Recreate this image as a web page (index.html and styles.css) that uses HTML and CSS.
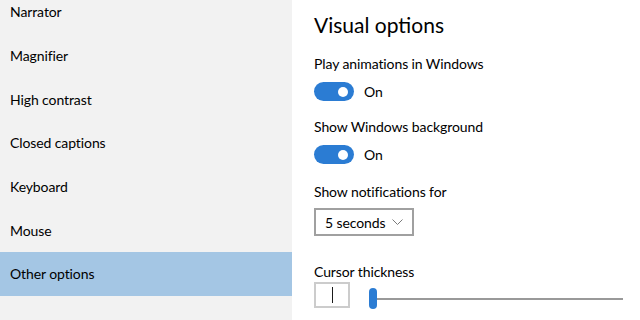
FILE: index.html
```html
<!DOCTYPE html>
<html lang="en">
<head>
    <meta charset="UTF-8">
    <title>Ease of Access - Other options</title>
    <link rel="stylesheet" href="styles.css">
</head>
<body>
    <!-- Left navigation -->
    <nav class="sidebar">
        <ul class="nav-list">
            <li class="nav-item">Narrator</li>
            <li class="nav-item">Magnifier</li>
            <li class="nav-item">High contrast</li>
            <li class="nav-item">Closed captions</li>
            <li class="nav-item">Keyboard</li>
            <li class="nav-item">Mouse</li>
            <li class="nav-item selected">Other options</li>
        </ul>
    </nav>

    <!-- Settings pane -->
    <main class="content">
        <h1 class="page-title">Visual options</h1>

        <div class="setting first">
            <div class="setting-label">Play animations in Windows</div>
            <div class="toggle-row">
                <span class="toggle on"><span class="knob"></span></span>
                <span class="toggle-text">On</span>
            </div>
        </div>

        <div class="setting">
            <div class="setting-label">Show Windows background</div>
            <div class="toggle-row">
                <span class="toggle on"><span class="knob"></span></span>
                <span class="toggle-text">On</span>
            </div>
        </div>

        <div class="setting notify">
            <div class="setting-label">Show notifications for</div>
            <div class="dropdown">
                <span class="dropdown-value">5 seconds</span>
                <svg class="chevron" width="11" height="6" viewBox="0 0 11 6">
                    <polyline points="0.5,0.5 5.5,5.5 10.5,0.5" fill="none" stroke="#7a7a7a" stroke-width="1"/>
                </svg>
            </div>
        </div>

        <div class="setting cursor">
            <div class="setting-label">Cursor thickness</div>
            <div class="cursor-row">
                <div class="cursor-preview"><span class="caret"></span></div>
                <div class="slider">
                    <span class="slider-thumb"></span>
                    <span class="slider-track"></span>
                </div>
            </div>
        </div>
    </main>
</body>
</html>
```

FILE: styles.css
```css
body {
    margin: 0;
    padding: 0;
    width: 640px;
    height: 320px;
    overflow: hidden;
    display: flex;
    background: #fff;
    color: #000;
    font-family: Lato, "Liberation Sans", sans-serif;
    font-size: 14px;
    letter-spacing: -0.1px;
}

/* sidebar */
.sidebar {
    width: 292px;
    flex-shrink: 0;
    background: #f2f2f2;
    overflow: hidden;
}

.nav-list {
    list-style: none;
    margin: -10px 0 0 0;
    padding: 0;
}

.nav-item {
    height: 43.7px;
    padding-left: 10px;
    display: flex;
    align-items: center;
}

.nav-item.selected {
    background: #a4c6e4;
}

/* content */
.content {
    flex: 1;
    padding: 11px 0 0 22px;
}

.page-title {
    margin: 0 0 14px 0;
    font-size: 21px;
    font-weight: normal;
    line-height: 28px;
    letter-spacing: 0;
}

.setting {
    margin-top: 15px;
}

.setting.first {
    margin-top: 0;
}

.setting.notify {
    margin-top: 17px;
}

.setting.cursor {
    margin-top: 25px;
}

.setting-label {
    line-height: 20px;
    padding-top: 1px;
}

.toggle-row {
    margin-top: 8px;
    display: flex;
    align-items: center;
    gap: 10px;
}

.toggle {
    width: 40px;
    height: 19px;
    border-radius: 10px;
    background: #2b7cd3;
    display: flex;
    align-items: center;
    justify-content: flex-end;
    padding-right: 6px;
    box-sizing: border-box;
}

.knob {
    width: 10px;
    height: 10px;
    border-radius: 50%;
    background: #fff;
}

.toggle-text {
    line-height: 19px;
}

/* dropdown */
.dropdown {
    margin-top: 6px;
    width: 100px;
    height: 28px;
    box-sizing: border-box;
    border: 2px solid #a0a0a0;
    display: flex;
    align-items: center;
    padding: 0 9px 0 9px;
    justify-content: space-between;
}

/* cursor thickness */
.cursor-row {
    display: flex;
    align-items: flex-start;
}

.cursor-preview {
    width: 36px;
    height: 26px;
    box-sizing: border-box;
    border: 2px solid #cccccc;
    display: flex;
    align-items: center;
    justify-content: center;
}

.caret {
    width: 1px;
    height: 16px;
    background: #1a1a1a;
}

.slider {
    flex: 1;
    margin: 6px 17px 0 19px;
    height: 21px;
    display: flex;
    align-items: center;
}

.slider-thumb {
    width: 8px;
    height: 21px;
    border-radius: 4px;
    background: #2b7cd3;
    flex-shrink: 0;
}

.slider-track {
    flex: 1;
    height: 2px;
    background: #999;
}
```
